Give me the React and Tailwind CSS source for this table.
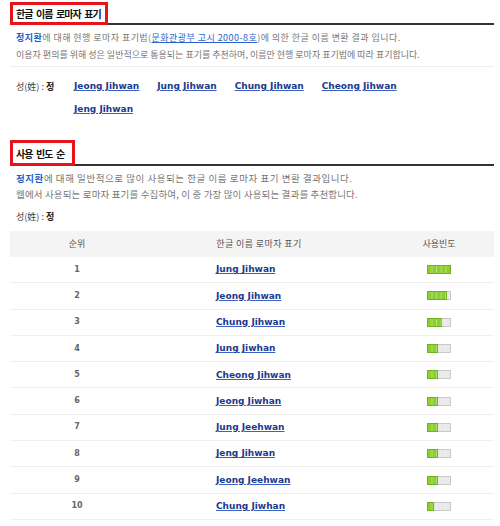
import React from 'react';

const KR = { fontFamily: '"Noto Sans CJK KR", "Noto Sans", sans-serif' };
const EN = { fontFamily: '"DejaVu Sans", Verdana, sans-serif' };

const names = ['Jeong Jihwan', 'Jung Jihwan', 'Chung Jihwan', 'Cheong Jihwan', 'Jeng Jihwan'];

const ranking = [
  { name: 'Jung Jihwan', fill: 23 },
  { name: 'Jeong Jihwan', fill: 19 },
  { name: 'Chung Jihwan', fill: 14 },
  { name: 'Jung Jiwhan', fill: 10 },
  { name: 'Cheong Jihwan', fill: 10 },
  { name: 'Jeong Jiwhan', fill: 10 },
  { name: 'Jung Jeehwan', fill: 10 },
  { name: 'Jeng Jihwan', fill: 10 },
  { name: 'Jeong Jeehwan', fill: 10 },
  { name: 'Chung Jiwhan', fill: 6 },
];

// small segmented usage bar
const UsageBar = ({ fill }) => (
  <svg width="24" height="9" viewBox="0 0 24 9">
    <rect x="0.5" y="0.5" width="23" height="8" fill="#e9e9e9" stroke="#c9c9c9" />
    <rect x="0.5" y="0.5" width={fill} height="8" fill="#8ccf2f" stroke="#6fb21c" />
    {[5, 9.6, 14.2, 18.8].map((x) => (
      <line key={x} x1={x} y1="1" x2={x} y2="8" stroke="#ffffff" strokeOpacity="0.35" />
    ))}
  </svg>
);

const Heading = ({ children, box }) => (
  <div className="flex border-b-2 border-[#333]">
    <span
      className={`flex items-center border-[3px] border-[#e5141b] bg-white pl-[3px] -mb-[2px] text-[10px] font-bold tracking-[-0.9px] [word-spacing:2px] text-[#111] ${box}`}
      style={KR}
    >
      {children}
    </span>
  </div>
);

export default function App() {
  return (
    <div className="w-[500px] bg-white px-[10px] pt-[2px] pr-[6px] text-[9px] text-[#777]" style={KR}>
      <Heading box="h-[23px] pr-[4px]">한글 이름 로마자 표기</Heading>

      <div className="pt-[4px] px-[6px] leading-[17px]">
        <p className="tracking-[0.45px]">
          <b className="text-[#1a5fc8]">정지환</b>에 대해 현행 로마자 표기법(
          <span className="text-[#2a63c9] underline">문화관광부 고시 2000-8호</span>)에 의한 한글 이름 변환 결과 입니다.
        </p>
        <p>이용자 편의를 위해 성은 일반적으로 통용되는 표기를 추천하며, 이름만 현행 로마자 표기법에 따라 표기합니다.</p>
      </div>
      <div className="mt-[3px] border-t border-[#eeeeee]" />

      <div className="flex pt-[8px] pl-[6px] leading-[23px]">
        <div className="w-[58px] shrink-0 text-[#444]">
          성(姓) : <b className="text-[#222]">정</b>
        </div>
        <div className="flex w-[380px] flex-wrap gap-x-[18px]">
          {names.map((n) => (
            <span key={n} className="text-[9px] font-bold text-[#1b3a8c] underline decoration-[#3a62c4]" style={EN}>
              {n}
            </span>
          ))}
        </div>
      </div>

      <div className="mt-[19px]">
        <Heading box="h-[26px] pr-[8px]">사용 빈도 순</Heading>
      </div>

      <div className="pt-[4px] px-[6px] text-[9.5px] leading-[16px]">
        <p className="tracking-[0.55px]">
          <b className="text-[#1a5fc8]">정지환</b>에 대해 일반적으로 많이 사용되는 한글 이름 로마자 표기 변환 결과입니다.
        </p>
        <p className="tracking-[0.15px]">웹에서 사용되는 로마자 표기를 수집하여, 이 중 가장 많이 사용되는 결과를 추천합니다.</p>
      </div>
      <div className="mt-[7px] pl-[6px] leading-[16px] text-[#444]">
        성(姓) : <b className="text-[#222]">정</b>
      </div>

      <div className="mt-[6px] w-[484px]">
        <div className="flex h-[26px] items-center bg-[#f4f4f4] text-[#555]">
          <div className="w-[134px] text-center">순위</div>
          <div className="w-[240px] pr-[10px] text-center tracking-[0.4px]">한글 이름 로마자 표기</div>
          <div className="flex-1 text-center">사용빈도</div>
        </div>
        {ranking.map((r, i) => (
          <div key={r.name} className="flex h-[26.3px] items-center border-b border-[#efefef]">
            <div className="w-[134px] text-center text-[8px] font-bold text-[#666]" style={EN}>
              {i + 1}
            </div>
            <div className="w-[240px] pl-[72px]">
              <span className="text-[9px] font-bold text-[#1b3a8c] underline decoration-[#3a62c4]" style={EN}>
                {r.name}
              </span>
            </div>
            <div className="flex flex-1 justify-center">
              <UsageBar fill={r.fill} />
            </div>
          </div>
        ))}
      </div>
    </div>
  );
}
